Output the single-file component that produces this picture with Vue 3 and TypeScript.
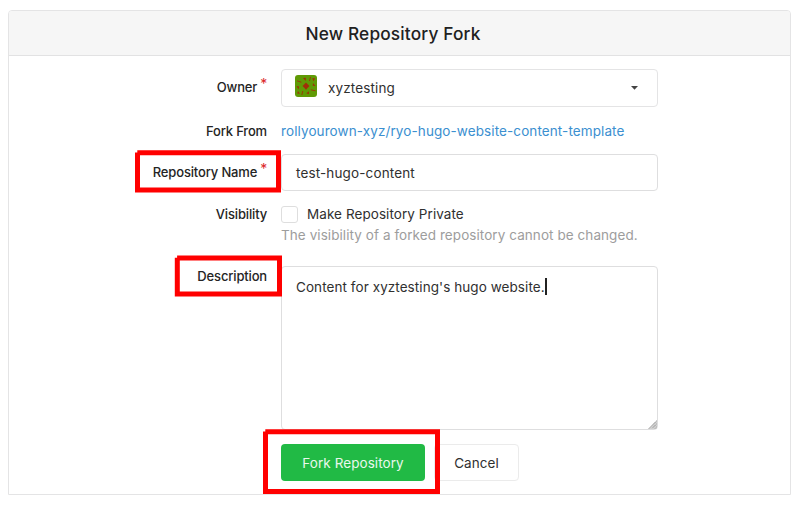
<script setup lang="ts">
import { ref } from 'vue'

const owner = ref('xyztesting')
const source = 'rollyourown-xyz/ryo-hugo-website-content-template'
const repoName = ref('test-hugo-content')
const isPrivate = ref(false)
const description = ref("Content for xyztesting's hugo website.")

interface Marker { x: number; y: number; right: number; bottom: number }
const markers: Marker[] = [
  { x: 135, y: 150.2, right: 281, bottom: 192.5 },
  { x: 174.8, y: 255.4, right: 282, bottom: 296.6 },
  { x: 263, y: 429.2, right: 440, bottom: 494 },
]

// Hand-drawn style frame: the top-left corner keeps a small notch.
function frame(m: Marker): string {
  const t = 5
  return `M${m.x + 2.3} ${m.y}H${m.right}V${m.bottom}H${m.x}V${m.y + 2.4}H${m.x + 2.3}Z`
    + `M${m.x + t} ${m.y + t}V${m.bottom - t}H${m.right - t}V${m.y + t}Z`
}
</script>

<template>
  <main class="page">
    <form class="card" @submit.prevent>
      <h3 class="header"><span class="title">New Repository Fork</span></h3>
      <div class="row owner">
        <label>Owner<span class="req">*</span></label>
        <div class="box select">
          <svg class="avatar" viewBox="0 0 22 22">
            <rect width="22" height="22" rx="3" fill="#609a05" />
            <g fill="#a03008">
              <path d="M11 7.5 12.5 9 14.5 11 12.5 13 11 14.7 9.5 13 7.5 11 9.5 9Z" />
              <path d="M8 3 10.8 2.8 10.8 6ZM17.3 3 20.3 3.5 18.3 6.3Z" />
              <path d="M1.5 11 4.2 11.5 3.5 14.5ZM18 8 20.5 11 17.7 10.8Z" />
              <path d="M11.3 18.3 14 16.3 13.8 19.3ZM3 16 5 18.8 2.2 18.5Z" />
            </g>
            <path d="M2 5.8 6.3 7.2M15.5 2 14.5 6M15.8 14.8 20.5 15.8M7.8 16 6.8 20" stroke="#a03008" stroke-width=".9" />
          </svg>
          <span class="text name">{{ owner }}</span>
          <svg class="caret" viewBox="0 0 7 4"><path d="M0 0H7L3.5 3.7Z" fill="#444" /></svg>
        </div>
      </div>
      <div class="row source">
        <label>Fork From</label>
        <a class="text link">{{ source }}</a>
      </div>
      <div class="row repo">
        <label>Repository Name<span class="req">*</span></label>
        <div class="box input"><span class="text repo-text">{{ repoName }}</span></div>
      </div>
      <div class="row visibility">
        <label>Visibility</label>
        <div>
          <div class="check" @click="isPrivate = !isPrivate">
            <span class="checkbox" :class="{ on: isPrivate }"></span>
            <span class="text private">Make Repository Private</span>
          </div>
          <div class="text help">The visibility of a forked repository cannot be changed.</div>
        </div>
      </div>
      <div class="row description">
        <label>Description</label>
        <div class="box area">
          <span class="text content">{{ description }}</span><i class="cursor"></i>
          <svg class="grip" viewBox="0 0 9 9">
            <path d="M9 0V9H0Z" fill="#d2d2d2" />
            <path d="M8.5 1 1 8.5M8.5 4 4 8.5M8.5 7 7 8.5" stroke="#888" stroke-dasharray="1 .6" />
          </svg>
        </div>
      </div>
      <div class="actions">
        <button class="submit"><span class="text">Fork Repository</span></button>
        <button class="cancel"><span class="text">Cancel</span></button>
      </div>
    </form>
    <svg class="markers" viewBox="0 0 800 505">
      <path v-for="m in markers" :key="m.y" :d="frame(m)" fill="#f00" fill-rule="evenodd" />
    </svg>
  </main>
</template>

<style>
body { margin: 0; background: #fff; }
</style>
<style scoped>
* { box-sizing: border-box; }
.page { position: relative; width: 800px; height: 505px; padding: 10px 9px 0 8px; font: 13.5px/18px Inter, sans-serif; color: #303030; }
.card { height: 485px; border: 1px solid #e4e4e5; border-radius: 4px 4px 0 0; }
.header { height: 45px; margin: 0; display: flex; align-items: center; justify-content: center; background: #f6f6f6; border-bottom: 1px solid #e2e2e3; border-radius: 3px 3px 0 0; font-size: 17.3px; letter-spacing: .16px; font-weight: 500; color: #212121; padding: 2px 13px 0 0; }
.row { display: grid; grid-template-columns: 258px 377px; column-gap: 14px; }
label { text-align: right; font-size: 13px; letter-spacing: -.16px; font-weight: 500; color: #242424; white-space: nowrap; }
.req { display: inline-block; height: 14px; color: #db2828; font-size: 14px; font-weight: 400; margin-left: 3px; position: relative; top: -3px; }
.text { white-space: nowrap; letter-spacing: .07px; }
.box { border: 1px solid #dededf; border-radius: 4px; display: flex; }
.owner { margin-top: 13px; }
.owner label { padding-top: 9px; }
.select { height: 38px; padding: 0 19px 0 13px; align-items: center; border-color: #e4e4e5; }
.avatar { width: 22px; height: 22px; margin-top: -4px; }
.name { margin-left: 11px; }
.name, .repo-text { letter-spacing: .14px; }
.caret { width: 7px; height: 4px; margin-left: auto; }
.source { margin-top: 15px; height: 18px; }
.link { color: #3b8fd0; letter-spacing: .1px; }
.repo { margin-top: 14px; }
.repo label { padding-top: 9px; }
.input { height: 37px; padding: 0 14px; align-items: center; }
.visibility { margin-top: 14px; height: 39px; }
.check { display: flex; align-items: center; height: 18px; }
.checkbox { width: 17px; height: 17px; border: 1px solid #dedede; border-radius: 3px; margin-right: 9px; }
.checkbox.on { background: #3b8fd0; }
.help { color: #9d9d9d; margin-top: 3px; }
.description { margin-top: 22px; }
.description label { padding-top: 1px; }
.area { position: relative; height: 164px; padding: 11px 14px; }
.cursor { width: 2px; height: 17px; background: #222; margin-left: 0; }
.grip { position: absolute; right: 0; bottom: 0; width: 9px; height: 9px; }
.actions { display: flex; gap: 9px; margin: 14px 0 0 272px; }
button { height: 37px; padding: 0; border-radius: 4px; font: inherit; display: flex; align-items: center; justify-content: center; }
.submit { width: 144px; border: 0; background: #21ba45; color: #e9f8ec; }
.cancel { width: 85px; border: 1px solid #ebebeb; background: #fff; color: #303030; }
.markers { position: absolute; left: 0; top: 0; width: 800px; height: 505px; pointer-events: none; }
</style>
